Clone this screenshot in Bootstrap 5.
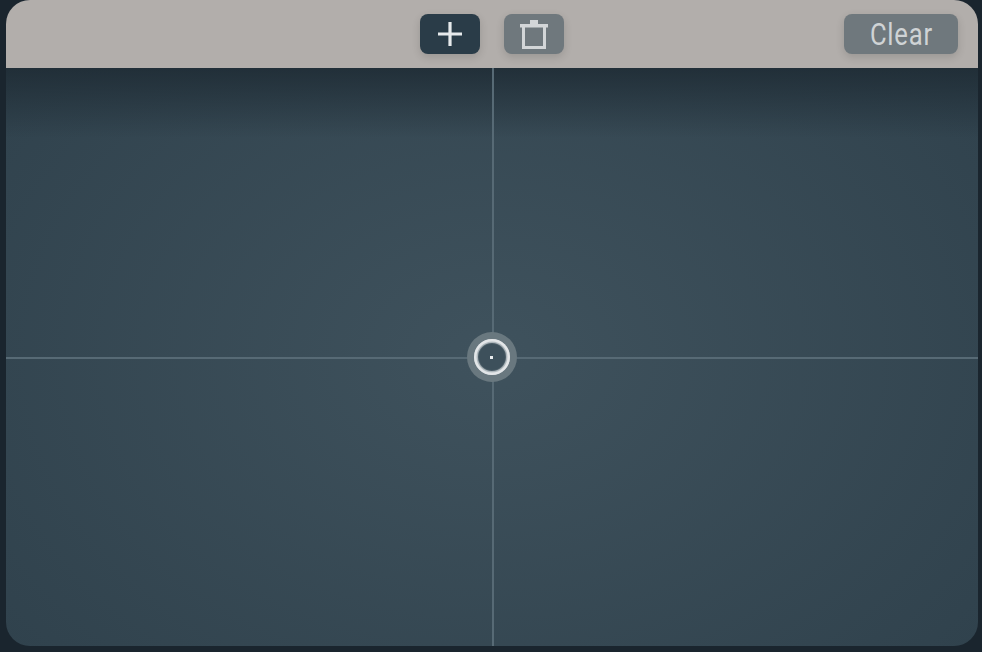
<!DOCTYPE html>
<html lang="en">
<head>
<meta charset="utf-8">
<title>Canvas</title>
<link href="https://cdn.jsdelivr.net/npm/bootstrap@5.3.0/dist/css/bootstrap.min.css" rel="stylesheet">
<style>
html,body{height:100%;}
body{background:#1a252e;overflow:hidden;}
.frame{width:972px;height:646px;margin-left:6px;border-radius:24px;overflow:hidden;}
.topbar{height:68px;flex:none;background:#b2aeab;padding:14px 20px 14px 20px;}
.tool{height:40px;border:0;border-radius:8px;padding:0;color:#d3d6d8;box-shadow:0 3px 8px rgba(0,0,0,.14);}
.tool-add{width:60px;background:#2a3c48;color:#e6eaec;margin-left:394px;}
.tool-del{width:60px;background:#6f787d;margin-left:24px;}
.tool-clear{width:114px;background:#6f787d;margin-left:auto;font-family:"Roboto",sans-serif;font-size:32px;font-weight:400;letter-spacing:1px;line-height:40px;color:#cfd3d5;}
.clear-txt{display:inline-block;transform:scaleX(.8);}
.stage{position:relative;flex:1;background:linear-gradient(180deg,rgba(30,43,52,.85) 0,rgba(30,43,52,0) 70px),radial-gradient(ellipse 620px 460px at 50% 50%,#3f525d 0,#30424d 100%);}
.hair-v{position:absolute;left:486px;top:0;bottom:0;width:1.5px;background:#576a75;}
.hair-h{position:absolute;left:0;right:0;top:289px;height:1.5px;background:#576a75;}
.dot-halo{position:absolute;left:461px;top:264px;width:50px;height:50px;border-radius:50%;background:#69787f;}
.dot-ring{position:absolute;left:7px;top:7px;width:36px;height:36px;border-radius:50%;background:#3d505b;box-shadow:inset 0 0 0 2.5px #e3e6e8,inset 0 0 1px 4px #b9c1c5;}
.dot-core{position:absolute;left:23px;top:23.5px;width:3px;height:3px;background:#e8ecee;}
</style>
</head>
<body>
<div class="frame d-flex flex-column">
  <div class="topbar d-flex align-items-center">
    <button type="button" class="btn tool tool-add d-flex align-items-center justify-content-center" aria-label="Add">
      <svg width="26" height="26" viewBox="0 0 26 26"><path d="M1 13H25M13 1V25" stroke="#e6eaec" stroke-width="3.2" fill="none"/></svg>
    </button>
    <button type="button" class="btn tool tool-del d-flex align-items-center justify-content-center" aria-label="Delete">
      <svg width="28" height="30" viewBox="0 0 28 30"><path d="M0 5h28v3.5H0zM10 1h8v4h-8z" fill="#d3d6d8"/><path d="M3.5 7v21.5h21V7" stroke="#d3d6d8" stroke-width="3" fill="none"/></svg>
    </button>
    <button type="button" class="btn tool tool-clear"><span class="clear-txt">Clear</span></button>
  </div>
  <div class="stage">
    <div class="hair-v"></div>
    <div class="hair-h"></div>
    <div class="dot-halo"><div class="dot-ring"></div><div class="dot-core"></div></div>
  </div>
</div>
<script src="https://cdn.jsdelivr.net/npm/bootstrap@5.3.0/dist/js/bootstrap.bundle.min.js"></script>
</body>
</html>
